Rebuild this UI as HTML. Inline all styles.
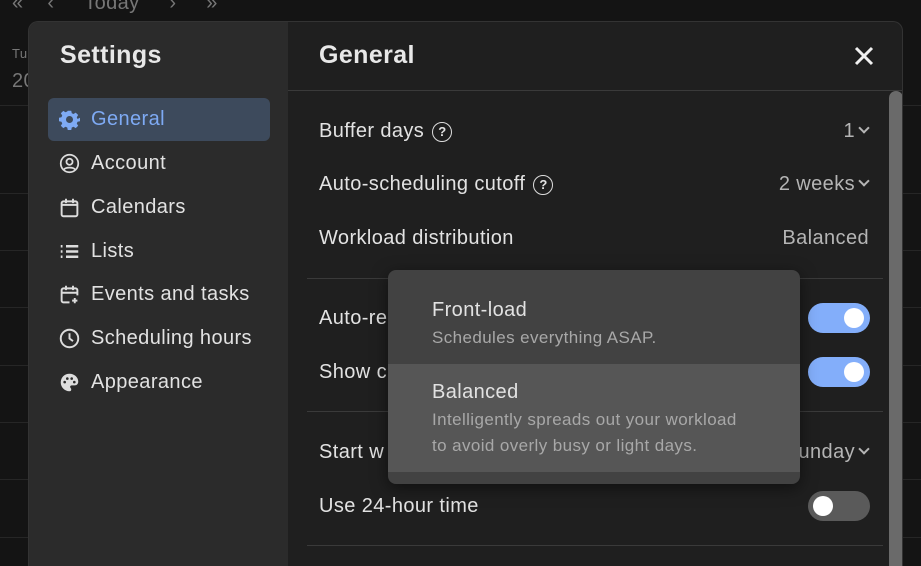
<!DOCTYPE html>
<html><head><meta charset="utf-8"><style>
*{margin:0;padding:0;box-sizing:border-box}
html,body{width:921px;height:566px;overflow:hidden}
body{background:#141414;font-family:"Liberation Sans",sans-serif;position:relative;color:#e6e6e6;letter-spacing:.4px}
.bgl{position:absolute;left:0;width:921px;height:1px;background:#262626}
.top{position:absolute;top:-8px;font-size:20px;color:#777}
.modal{position:absolute;left:28px;top:21px;width:875px;height:545px;border-radius:10px 10px 0 0;overflow:hidden;background:#1f1f1f;border:1px solid #333;border-bottom:none}
.side{position:absolute;left:0;top:0;width:259px;height:100%;background:#2b2b2b}
.side h1{position:absolute;left:31px;top:19px;font-size:25px;font-weight:bold;color:#e8e8e8}
.item{position:absolute;left:19px;width:222px;height:43px;border-radius:6px;font-size:20px;color:#e2e2e2;display:flex;align-items:center;padding-left:11px}
.item svg{width:21px;height:21px;margin-right:11px}
.item.on{background:#3d4a5c;color:#7eaaf4}
.main h2{position:absolute;left:290px;top:19px;font-size:25px;font-weight:bold;color:#e8e8e8}
.row{position:absolute;left:290px;font-size:20px;color:#e2e2e2}
.val{position:absolute;right:34px;font-size:20px;color:#b5b5b5}
.div{position:absolute;left:278px;width:576px;height:1px;background:#3a3a3a}
.q{display:inline-block;width:20px;height:20px;border:1.8px solid #ddd;border-radius:50%;font-size:13px;font-weight:bold;text-align:center;line-height:17px;vertical-align:1px;margin-left:2px;letter-spacing:0}
.tg{position:absolute;left:779px;width:62px;height:30px;border-radius:15px;background:#83aefa}
.tg i{position:absolute;right:6px;top:5px;width:20px;height:20px;border-radius:50%;background:#fff}
.tg.off{background:#5a5a5a}.tg.off i{left:5px;right:auto}
.dd{position:absolute;left:388px;top:270px;width:412px;height:214px;background:#424242;border-radius:8px;overflow:hidden;box-shadow:0 4px 16px rgba(0,0,0,.5)}
.dd .hl{position:absolute;left:0;top:94px;width:100%;height:108px;background:#565656}
.dd .t{position:absolute;left:44px;font-size:20px;color:#e2e2e2}
.dd .s{position:absolute;left:44px;font-size:17px;color:#a8a8a8;line-height:26px}
.chev{display:inline-block;width:8px;height:8px;border-right:2px solid #b5b5b5;border-bottom:2px solid #b5b5b5;transform:rotate(45deg);margin-left:5px;vertical-align:5px}
</style></head><body>
<div class="bgl" style="top:105px"></div><div class="bgl" style="top:193px"></div><div class="bgl" style="top:250px"></div><div class="bgl" style="top:307px"></div><div class="bgl" style="top:365px"></div><div class="bgl" style="top:422px"></div><div class="bgl" style="top:479px"></div><div class="bgl" style="top:537px"></div>
<div class="top" style="left:12px">«&nbsp;&nbsp;&nbsp;&nbsp;‹&nbsp;&nbsp;&nbsp;&nbsp;&nbsp;Today&nbsp;&nbsp;&nbsp;&nbsp;&nbsp;›&nbsp;&nbsp;&nbsp;&nbsp;&nbsp;»</div>
<div style="position:absolute;left:12px;top:46px;font-size:13px;color:#777">Tu</div>
<div style="position:absolute;left:12px;top:70px;font-size:20px;color:#777">20</div>
<div class="modal">
 <div class="side">
  <h1>Settings</h1>
  <div class="item on" style="top:76px"><svg viewBox="0 0 24 24"><path fill="#7eaaf4" d="M10 2h4l.6 2.8 2 .9 2.5-1.6 2.8 2.8-1.6 2.5.9 2L24 10v4l-2.8.6-.9 2 1.6 2.5-2.8 2.8-2.5-1.6-2 .9L14 24h-4l-.6-2.8-2-.9-2.5 1.6-2.8-2.8 1.6-2.5-.9-2L0 14v-4l2.8-.6.9-2L2.1 4.9 4.9 2.1l2.5 1.6 2-.9zM12 8a4 4 0 100 8 4 4 0 000-8z"/></svg>General</div>
  <div class="item" style="top:120px"><svg viewBox="0 0 24 24" fill="none" stroke="#ddd" stroke-width="2"><circle cx="12" cy="12" r="10"/><circle cx="12" cy="10" r="3.5"/><path d="M5.5 19c2-3 11-3 13 0"/></svg>Account</div>
  <div class="item" style="top:164px"><svg viewBox="0 0 24 24" fill="none" stroke="#ddd" stroke-width="2.2"><rect x="3" y="5" width="18" height="17" rx="2"/><path d="M3 9h18M8 2v5M16 2v5" /></svg>Calendars</div>
  <div class="item" style="top:208px"><svg viewBox="0 0 24 24" fill="none" stroke="#ddd" stroke-width="2.8"><path d="M2 6h2M2 12h2M2 18h2M8 6h14M8 12h14M8 18h14"/></svg>Lists</div>
  <div class="item" style="top:251px"><svg viewBox="0 0 24 24" fill="none" stroke="#ddd" stroke-width="2.2"><path d="M12 21H5a2 2 0 01-2-2V7a2 2 0 012-2h14a2 2 0 012 2v6M3 10h18M8 2v5M16 2v5M18 16v6M15 19h6"/></svg>Events and tasks</div>
  <div class="item" style="top:295px"><svg viewBox="0 0 24 24" fill="none" stroke="#ddd" stroke-width="2.2"><circle cx="12" cy="12" r="10"/><path d="M12 6v6l4 3"/></svg>Scheduling hours</div>
  <div class="item" style="top:339px"><svg viewBox="0 0 24 24"><path fill="#ddd" d="M12 2C6 2 2 6.5 2 12s4.5 10 10 10c1.5 0 2-1 2-2 0-1.5-1.3-1.8-1.3-3 0-1 .8-1.7 2-1.7H18c2.5 0 4-2 4-4.3C22 6 17.5 2 12 2zM6.5 13a1.5 1.5 0 110-3 1.5 1.5 0 010 3zm3-4a1.5 1.5 0 110-3 1.5 1.5 0 010 3zm5 0a1.5 1.5 0 110-3 1.5 1.5 0 010 3zm3 4a1.5 1.5 0 110-3 1.5 1.5 0 010 3z"/></svg>Appearance</div>
 </div>
 <div class="main">
  <h2>General</h2>
  <svg style="position:absolute;left:825px;top:24px" width="20" height="20" viewBox="0 0 20 20"><path d="M2 2L18 18M18 2L2 18" stroke="#f0f0f0" stroke-width="3"/></svg>
  <div style="position:absolute;left:259px;top:68px;width:616px;height:1px;background:#3a3a3a"></div>
  <div style="position:absolute;left:860px;top:69px;width:14px;height:500px;background:#6a6a6a;border-radius:7px 7px 0 0"></div>
  <div class="row" style="top:98px">Buffer days <span class="q">?</span></div><div class="val" style="top:98px">1<span class="chev"></span></div>
  <div class="row" style="top:151px">Auto-scheduling cutoff <span class="q">?</span></div><div class="val" style="top:151px">2 weeks<span class="chev"></span></div>
  <div class="row" style="top:205px">Workload distribution</div><div class="val" style="top:205px;right:33px">Balanced</div>
  <div class="div" style="top:256px"></div>
  <div class="row" style="top:285px">Auto-re</div><div class="tg" style="top:281px"><i></i></div>
  <div class="row" style="top:339px">Show c</div><div class="tg" style="top:335px"><i></i></div>
  <div class="div" style="top:389px"></div>
  <div class="row" style="top:419px">Start w</div><div class="val" style="top:419px">unday<span class="chev"></span></div>
  <div class="row" style="top:473px">Use 24-hour time</div><div class="tg off" style="top:469px"><i></i></div>
  <div class="div" style="top:523px"></div>
 </div>
</div>
<div class="dd"><div class="hl"></div>
 <div class="t" style="top:29px">Front-load</div>
 <div class="s" style="top:55px">Schedules everything ASAP.</div>
 <div class="t" style="top:111px">Balanced</div>
 <div class="s" style="top:137px">Intelligently spreads out your workload<br>to avoid overly busy or light days.</div>
</div>
</body></html>
